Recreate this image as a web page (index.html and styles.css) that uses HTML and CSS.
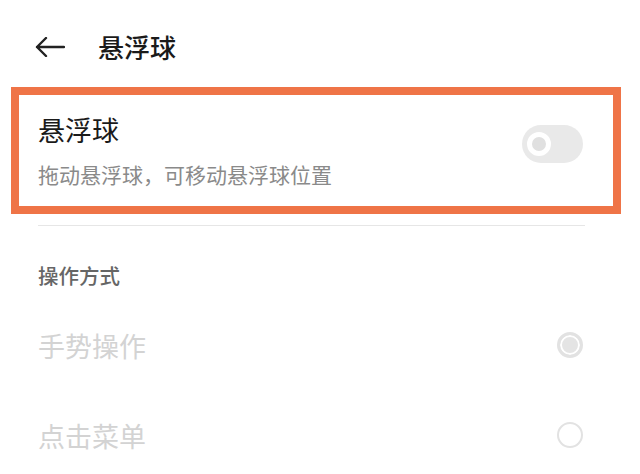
FILE: index.html
```html
<!DOCTYPE html>
<html lang="zh-CN">
<head>
    <meta charset="UTF-8">
    <meta name="viewport" content="width=device-width, initial-scale=1.0">
    <title>悬浮球</title>
    <link rel="stylesheet" href="styles.css">
</head>
<body>
    <div class="header">
        <svg class="back-icon" width="30" height="20" viewBox="0 0 30 20">
            <path d="M29 10H2M11 1L2 10l9 9" fill="none" stroke="#222" stroke-width="2.4" stroke-linecap="round" stroke-linejoin="round"/>
        </svg>
        <h1>悬浮球</h1>
    </div>

    <!-- Highlighted setting -->
    <div class="setting-card">
        <div class="setting-text">
            <div class="setting-title">悬浮球</div>
            <div class="setting-desc">拖动悬浮球，可移动悬浮球位置</div>
        </div>
        <div class="switch">
            <span class="switch-knob"></span>
        </div>
    </div>

    <div class="divider"></div>

    <div class="section-label">操作方式</div>
    <div class="option-list">
        <div class="option-row">
            <span class="option-name">手势操作</span>
            <span class="radio checked"></span>
        </div>
        <div class="option-row">
            <span class="option-name">点击菜单</span>
            <span class="radio"></span>
        </div>
    </div>
</body>
</html>
```

FILE: styles.css
```css
body {
    margin: 0;
    background: #fff;
    font-family: "Noto Sans CJK SC", "Noto Sans", sans-serif;
    color: #1a1a1a;
}
.header {
    display: flex;
    align-items: center;
    height: 34px;
    padding: 30px 0 0 35px;
}
.back-icon {
    display: block;
}
.header h1 {
    margin: 0 0 0 33px;
    font-size: 26px;
    font-weight: 500;
    line-height: 34px;
}
.setting-card {
    display: flex;
    justify-content: space-between;
    align-items: flex-start;
    margin: 23px 19px 0 11px;
    border: 8px solid #ef7447;
    padding: 18px 30px 17px 19px;
}
.setting-title {
    font-size: 27px;
    line-height: 34px;
}
.setting-desc {
    margin-top: 12px;
    font-size: 21px;
    line-height: 30px;
    color: #8a8a8a;
}
.switch {
    display: flex;
    align-items: center;
    width: 61px;
    height: 38px;
    margin-top: 12px;
    padding-left: 5px;
    box-sizing: border-box;
    border-radius: 19px;
    background: #e9e9e9;
}
.switch-knob {
    width: 14px;
    height: 14px;
    border: 5px solid #fff;
    border-radius: 50%;
    background: #e0e0e0;
}
.divider {
    height: 1px;
    margin: 11px 55px 0 38px;
    background: #e6e6e6;
}
.section-label {
    margin: 35px 0 0 38px;
    font-size: 20.5px;
    font-weight: 500;
    line-height: 28px;
    color: #666;
}
.option-list {
    margin-top: 11px;
}
.option-row {
    display: flex;
    justify-content: space-between;
    align-items: center;
    height: 90px;
    padding: 0 57px 0 38px;
}
.option-name {
    font-size: 27px;
    color: #d3d3d3;
}
.radio {
    width: 22px;
    height: 22px;
    border: 2px solid #e2e2e2;
    border-radius: 50%;
}
.radio.checked {
    width: 20px;
    height: 20px;
    border-width: 3px;
    background: #e4e4e4;
    box-shadow: inset 0 0 0 2px #fff;
}
```
